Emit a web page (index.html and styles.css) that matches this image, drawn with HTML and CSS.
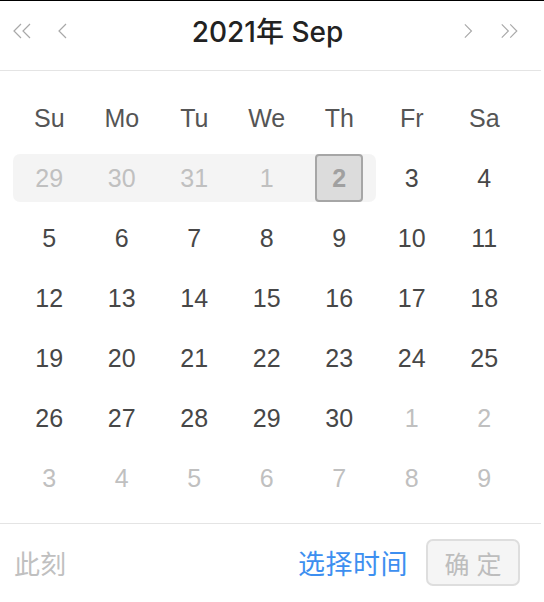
FILE: index.html
```html
<!DOCTYPE html>
<html lang="zh">
<head>
    <meta charset="UTF-8">
    <meta name="viewport" content="width=device-width, initial-scale=1.0">
    <title>日期选择</title>
    <link rel="stylesheet" href="styles.css">
</head>
<body>
    <div class="topline"></div>
    <div class="picker">
        <div class="header">
            <div class="nav">
                <svg class="ico dbl" viewBox="0 0 22 20"><polyline points="9,3 2,10 9,17"/><polyline points="18,3 11,10 18,17"/></svg>
                <svg class="ico" viewBox="0 0 12 20"><polyline points="10,3 3,10 10,17"/></svg>
            </div>
            <div class="title">2021年 Sep</div>
            <div class="nav">
                <svg class="ico" viewBox="0 0 12 20"><polyline points="2,3 9,10 2,17"/></svg>
                <svg class="ico dbl" viewBox="0 0 22 20"><polyline points="4,3 11,10 4,17"/><polyline points="13,3 20,10 13,17"/></svg>
            </div>
        </div>

        <div class="body">
            <div class="grid" id="grid">
                <div class="wk">Su</div>
                <div class="wk">Mo</div>
                <div class="wk">Tu</div>
                <div class="wk">We</div>
                <div class="wk">Th</div>
                <div class="wk">Fr</div>
                <div class="wk">Sa</div>
            </div>
        </div>

        <div class="footer">
            <span class="now">此刻</span>
            <div class="actions">
                <span class="pick-time">选择时间</span>
                <button class="ok">确 定</button>
            </div>
        </div>
    </div>

    <script>
        // Septembre 2021 : commence un mercredi
        const grid = document.getElementById("grid");
        const days = [];
        [29, 30, 31].forEach(d => days.push({ d, cls: "other" }));
        for (let d = 1; d <= 30; d++) days.push({ d, cls: "" });
        for (let d = 1; days.length < 42; d++) days.push({ d, cls: "other" });

        days.forEach((item, i) => {
            const cell = document.createElement("div");
            cell.className = "cell";
            const span = document.createElement("span");
            span.className = "day " + item.cls;
            span.textContent = item.d;

            // plage désactivée : du 29 au 2
            if (i <= 4) {
                cell.classList.add("range");
                span.classList.add("disabled");
                if (i === 0) cell.classList.add("start");
                if (i === 4) { cell.classList.add("end"); span.classList.add("current"); }
            }
            cell.appendChild(span);
            grid.appendChild(cell);
        });
    </script>
</body>
</html>
```

FILE: styles.css
```css
body {
    margin: 0;
    font-family: "Liberation Sans", Arial, "Noto Sans CJK SC", sans-serif;
    background: #fff;
    color: #4a4a4a;
}

.topline {
    height: 1px;
    background: #000;
}

.header {
    height: 60px;
    padding: 0 22px 9px 12px;
    display: flex;
    align-items: center;
    justify-content: space-between;
    border-bottom: 1px solid #e4e4e4;
    margin-right: 3px;
}

.nav {
    display: flex;
    align-items: center;
    gap: 22px;
    width: 56px;
}

.nav:last-child {
    justify-content: flex-end;
    gap: 24px;
}

.ico {
    width: 12px;
    height: 20px;
    fill: none;
    stroke: #a8a8a8;
    stroke-width: 1.2;
}

.ico.dbl {
    width: 22px;
}

.title {
    font-family: "Inter", "Noto Sans CJK SC", sans-serif;
    font-size: 28px;
    font-weight: 500;
    color: #222;
    margin: 0 0 2px 4px;
}

.body {
    padding: 17px 0 15px 13px;
    border-bottom: 1px solid #e4e4e4;
    margin-right: 3px;
}

.grid {
    display: grid;
    grid-template-columns: repeat(7, 72.5px);
    grid-auto-rows: 60px;
}

.wk {
    display: flex;
    align-items: center;
    justify-content: center;
    font-size: 25px;
    color: #555;
}

.cell {
    display: flex;
    align-items: center;
    justify-content: center;
    position: relative;
}

.cell.range::before {
    content: "";
    position: absolute;
    left: 0;
    right: 0;
    top: 6px;
    bottom: 6px;
    background: #f4f4f4;
}

.cell.start::before {
    border-radius: 7px 0 0 7px;
}

.cell.end::before {
    border-radius: 0 7px 7px 0;
}

.day {
    position: relative;
    width: 48px;
    height: 48px;
    display: flex;
    align-items: center;
    justify-content: center;
    font-size: 25px;
    color: #474747;
    box-sizing: border-box;
}

.day.other {
    color: #c0c0c0;
}

.day.disabled {
    color: #c0c0c0;
}

.day.current {
    background: #dcdcdc;
    border: 2px solid #a6a6a6;
    border-radius: 4px;
    color: #a0a0a0;
    font-weight: bold;
}

.footer {
    height: 77px;
    display: flex;
    align-items: center;
    justify-content: space-between;
    padding: 0 24px 0 14px;
}

.now {
    font-size: 26px;
    color: #c0c0c0;
}

.actions {
    display: flex;
    align-items: center;
    gap: 18px;
}

.pick-time {
    font-size: 27px;
    letter-spacing: 0.5px;
    color: #3d8ff0;
}

.ok {
    width: 94px;
    height: 47px;
    background: #f5f5f5;
    border: 2px solid #dedede;
    border-radius: 7px;
    color: #bdbdbd;
    font-size: 25px;
    font-family: inherit;
    padding: 0;
}
```
